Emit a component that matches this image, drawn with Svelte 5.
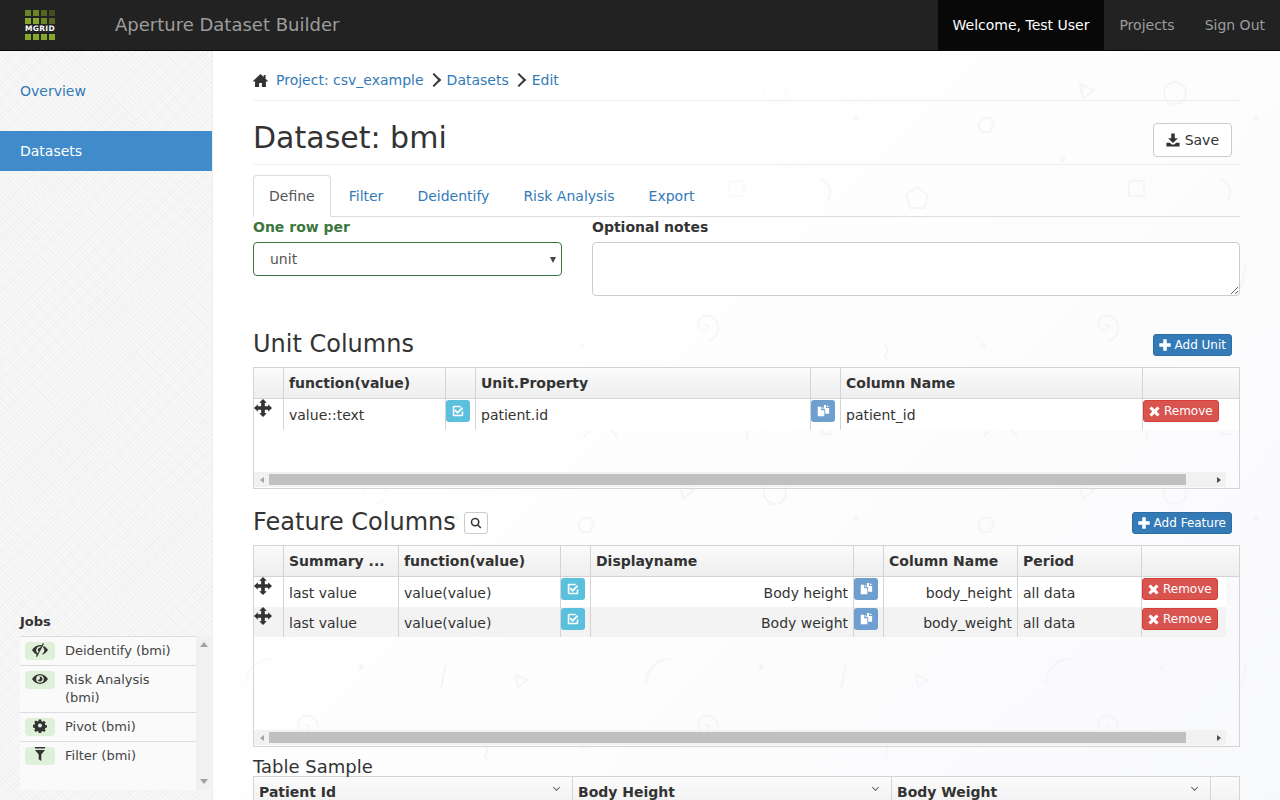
<script lang="ts">
  const tabs = ['Define', 'Filter', 'Deidentify', 'Risk Analysis', 'Export'];

  const jobs = [
    { icon: 'eyeClose', name: 'Deidentify (bmi)' },
    { icon: 'eyeOpen', name: 'Risk Analysis (bmi)' },
    { icon: 'cog', name: 'Pivot (bmi)' },
    { icon: 'filter', name: 'Filter (bmi)' }
  ];

  const features = [
    { summary: 'last value', fn: 'value(value)', display: 'Body height', column: 'body_height', period: 'all data' },
    { summary: 'last value', fn: 'value(value)', display: 'Body weight', column: 'body_weight', period: 'all data' }
  ];
</script>

{#snippet icon(name: string, size = 14)}
  <svg class="icon" width={size} height={size} viewBox="0 0 16 16" fill="currentColor" aria-hidden="true">
    {#if name === 'home'}
      <path d="M8 1 0 8.600l1 1.100 1.200-1.100V15h4.300v-4.400h3V15h4.300V8.600l1.200 1.100 1-1.100-2.600-2.500V2h-2v2.200z"/>
    {:else if name === 'save'}
      <path d="M6 .5h4V6h3.600L8 11.300 2.400 6H6zM.5 11h4L6.500 13.200h3l2-2.200h4v4.500H.5z"/>
    {:else if name === 'plus'}
      <path d="M6 1.500h4V6h4.500v4H10v4.500H6V10H1.500V6H6z"/>
    {:else if name === 'remove'}
      <path d="M4.400 1.700 8 5.300l3.600-3.600 2.700 2.700L10.700 8l3.600 3.600-2.700 2.700L8 10.700l-3.600 3.600-2.700-2.700L5.300 8 1.700 4.400z"/>
    {:else if name === 'move'}
      <path d="M8 0l3.400 3.400H9.600v3h3V4.600L16 8l-3.400 3.400V9.600h-3v3h1.800L8 16l-3.400-3.400h1.800v-3h-3v1.800L0 8l3.400-3.400v1.800h3v-3H4.600z"/>
    {:else if name === 'check'}
      <path d="M3.500 2H11v1.800H3.800v8.400h8.400V9.500L14 7.700v4.800a1.500 1.500 0 0 1-1.500 1.500h-9A1.500 1.500 0 0 1 2 12.500v-9A1.500 1.500 0 0 1 3.500 2z"/><path d="M5.200 6.300 7.500 8.500l5-5L14 5 7.500 11.500 3.800 7.800z"/>
    {:else if name === 'duplicate'}
      <path d="M2 3h4v4h3.500v7H2z"/><path d="M7 3.200 9.200 5.500H7zM9 1h2.500v3.500H15V11h-4.500V6.500L9 5z"/><path d="M12.500 1l2.400 2.400h-2.400z"/>
    {:else if name === 'search'}
      <path fill-rule="evenodd" d="M6.800 1a5.800 5.800 0 0 1 4.700 9.200l3.700 3.700-1.500 1.400-3.600-3.700A5.800 5.800 0 1 1 6.800 1zm0 2a3.800 3.800 0 1 0 0 7.600 3.800 3.800 0 0 0 0-7.600z"/>
    {:else if name === 'eyeOpen'}
      <path fill-rule="evenodd" d="M8 3c3.400 0 6.200 2.200 8 5-1.800 2.800-4.600 5-8 5s-6.200-2.200-8-5c1.800-2.800 4.600-5 8-5zm0 1.200a3.800 3.800 0 1 0 0 7.600 3.800 3.800 0 0 0 0-7.600zM8 5.500a2.500 2.500 0 1 1-2.400 3.200c.8.300 2-.2 2.300-1 .3-.8 0-1.600-.6-2.100.2-.1.400-.1.700-.1z"/>
    {:else if name === 'eyeClose'}
      <path fill-rule="evenodd" d="M10.900 1l1.100.7-7 13.300-1.100-.7.900-1.800C3 11.600 1.300 10 0 8c1.800-2.800 4.600-5 8-5 .7 0 1.300.1 1.900.2zM8 4.200a3.800 3.800 0 0 0-2 7l.7-1.300a2.500 2.500 0 0 1 1.700-4.400l.6-1.100A3.800 3.800 0 0 0 8 4.200z"/><path d="M11.700 4.100c1.800.9 3.200 2.300 4.300 3.900-1.400 2.200-3.500 4-6 4.700l.6-1.300a3.800 3.800 0 0 0 .5-6z"/>
    {:else if name === 'cog'}
      <path fill-rule="evenodd" d="M6.500 1h3l.4 2 1.400.6 1.700-1.100 2 2-1.100 1.700.6 1.400 2 .4v2.900l-2 .5-.6 1.300 1.100 1.800-2 2-1.700-1.100-1.400.5-.4 2h-3l-.4-2-1.400-.5-1.700 1.100-2-2 1.100-1.800-.6-1.300-2-.5V7.500l2-.4.6-1.400-1.100-1.700 2-2 1.700 1.100L6.100 3zM8 5.800a2.500 2.500 0 1 0 0 5 2.500 2.500 0 0 0 0-5z" transform="translate(1.400 .8) scale(.82 .8)"/>
    {:else if name === 'filter'}
      <path d="M3 0h10v1.500H3zM3 3h10L9.300 7.500V14l-2.600-1.800V7.500z"/>
    {/if}
  </svg>
{/snippet}

{#snippet hscroll()}
  <div class="hscroll">
    <span class="arrow left"></span>
    <span class="thumb"></span>
    <span class="arrow right"></span>
  </div>
{/snippet}

<div class="page">
  <nav class="navbar">
    <a class="logo" href="#top" aria-label="MGRID">
      <div class="logo-row">
        <i class="l2"></i><i class="l2"></i><i class="l3"></i><i class="l4"></i>
      </div>
      <div class="logo-row">
        <i class="l1"></i><i class="l1"></i><i class="l2"></i><i class="l3"></i>
      </div>
      <span class="logo-text">MGRID</span>
      <div class="logo-row">
        <i class="l1"></i><i class="l1"></i><i class="l1"></i><i class="l1"></i>
      </div>
    </a>
    <span class="brand">Aperture Dataset Builder</span>
    <div class="nav-right">
      <span class="welcome">Welcome, Test User</span>
      <a href="#top">Projects</a>
      <a href="#top">Sign Out</a>
    </div>
  </nav>

  <div class="body">
    <aside class="sidebar">
      <ul class="side-nav">
        <li><a href="#top">Overview</a></li>
        <li class="active"><a href="#top">Datasets</a></li>
      </ul>

      <div class="jobs">
        <h5>Jobs</h5>
        <div class="jobs-box">
          <ul class="job-list">
            {#each jobs as job}
              <li>
                <span class="job-icon">{@render icon(job.icon, 16)}</span>
                <span class="job-name">{job.name}</span>
              </li>
            {/each}
          </ul>
          <div class="vscroll">
            <span class="arrow up"></span>
            <span class="arrow down"></span>
          </div>
        </div>
      </div>
    </aside>

    <main class="main">
      <svg class="pattern" width="1068" height="749" aria-hidden="true">
        <defs>
          <pattern id="shapes" width="400" height="400" patternUnits="userSpaceOnUse" x="187" y="349">
            <g fill="none" stroke="#f4f5f6" stroke-width="2" stroke-linecap="round">
              <path d="M305 325a3 3 0 0 1 4 3 6 6 0 0 1-9 1 9 9 0 0 1 3-13 12 12 0 0 1 14 6 15 15 0 0 1-7 19"/>
              <path d="M246 283a24 24 0 0 1 24-24"/>
              <path d="M46 264l-5 24"/>
              <path d="M116 275l11 5-9 7z"/>
              <circle cx="375" cy="93" r="11"/>
              <path d="M280 84l14 6-11 9z"/>
              <path d="M178 125l4-7h8l4 7-4 7h-8z"/>
              <path d="M117 187l11 8-4 13h-14l-4-13z"/>
              <rect x="329" y="181" width="15" height="15" rx="1"/>
              <path d="M85 345l3 5-3 5 3 5"/>
              <path d="M184 37a18 18 0 0 1 33 1"/>
              <path d="M347 29v9"/>
              <path d="M22 180a14 14 0 0 1 6 20"/>
              <path d="M27 20l4 14h-10z"/>
            </g>
            <g fill="#f4f5f6">
              <circle cx="361" cy="267" r="2.500"/>
              <circle cx="183" cy="345" r="2.500"/>
              <circle cx="56" cy="118" r="2.500"/>
              <circle cx="263" cy="159" r="2.500"/>
            </g>
          </pattern>
        </defs>
        <rect width="1068" height="749" fill="url(#shapes)"/>
      </svg>

      <div class="content">
        <ol class="crumbs">
          <li class="home">{@render icon('home', 15)}<a href="#top">Project: csv_example</a></li>
          <li><a href="#top">Datasets</a></li>
          <li><a href="#top">Edit</a></li>
        </ol>

        <div class="title-row">
          <h1>Dataset: bmi</h1>
          <button class="btn save">{@render icon('save', 14)} Save</button>
        </div>

        <ul class="tabs">
          {#each tabs as tab, i}
            <li class:active={i === 0}><a href="#top">{tab}</a></li>
          {/each}
        </ul>

        <div class="form-row">
          <div class="field-unit">
            <label for="unit" class="ok">One row per</label>
            <div class="select" id="unit">unit<span class="caret"></span></div>
          </div>
          <div class="field-notes">
            <label for="notes">Optional notes</label>
            <textarea id="notes"></textarea>
          </div>
        </div>

        <div class="section-head unit-head">
          <h2>Unit Columns</h2>
          <button class="btn-xs primary">{@render icon('plus', 14)} Add Unit</button>
        </div>

        <div class="grid unit-grid">
          <div class="row head">
            <div></div><div>function(value)</div><div></div><div>Unit.Property</div><div></div><div>Column Name</div><div></div>
          </div>
          <div class="row">
            <div class="move">{@render icon('move', 18)}</div>
            <div>value::text</div>
            <div class="tool"><span class="square info">{@render icon('check', 14)}</span></div>
            <div>patient.id</div>
            <div class="tool"><span class="square dup">{@render icon('duplicate', 14)}</span></div>
            <div>patient_id</div>
            <div class="tool"><button class="btn-xs danger">{@render icon('remove', 13)} Remove</button></div>
          </div>
          <div class="spacer"></div>
          {@render hscroll()}
        </div>

        <div class="section-head feature-head">
          <h2>Feature Columns</h2>
          <span class="search-btn">{@render icon('search', 12)}</span>
          <button class="btn-xs primary push">{@render icon('plus', 14)} Add Feature</button>
        </div>

        <div class="grid feature-grid">
          <div class="row head">
            <div></div><div>Summary ...</div><div>function(value)</div><div></div><div>Displayname</div><div></div><div>Column Name</div><div>Period</div><div></div>
          </div>
          {#each features as f, i}
            <div class="row" class:odd={i === 1}>
              <div class="move">{@render icon('move', 18)}</div>
              <div>{f.summary}</div>
              <div>{f.fn}</div>
              <div class="tool"><span class="square info">{@render icon('check', 14)}</span></div>
              <div class="num">{f.display}</div>
              <div class="tool"><span class="square dup">{@render icon('duplicate', 14)}</span></div>
              <div class="num">{f.column}</div>
              <div>{f.period}</div>
              <div class="tool"><button class="btn-xs danger">{@render icon('remove', 13)} Remove</button></div>
            </div>
          {/each}
          <div class="spacer"></div>
          {@render hscroll()}
        </div>

        <h4>Table Sample</h4>
        <div class="sample">
          {#each ['Patient Id', 'Body Height', 'Body Weight'] as col}
            <div class="sample-col">{col}<span class="sort"></span></div>
          {/each}
          <div class="sample-col"></div>
        </div>
      </div>
    </main>
  </div>
</div>

<style>
  :global(body) {
    margin: 0;
    font-family: "DejaVu Sans", sans-serif;
    font-size: 14px;
    line-height: 20px;
    color: #333;
  }

  * { box-sizing: border-box; }

  a { color: #337ab7; text-decoration: none; }

  .page {
    height: 800px;
    display: flex;
    flex-direction: column;
    overflow: hidden;
  }

  .icon { display: inline-block; flex-shrink: 0; vertical-align: -2px; }

  /* top bar */
  .navbar {
    height: 51px;
    flex-shrink: 0;
    display: flex;
    align-items: stretch;
    background: #222;
    border-bottom: 1px solid #080808;
  }

  .logo {
    width: 31px;
    margin: 10px 0 0 25px;
    display: flex;
    flex-direction: column;
    gap: 2px;
  }

  .logo-row { display: flex; gap: 2px; height: 6px; }
  .logo-row i { width: 6px; height: 6px; }
  .l1 { background: #84a62c; }
  .l2 { background: #6b8427; }
  .l3 { background: #566523; }
  .l4 { background: #434d20; }

  .logo-text {
    height: 6px;
    font-size: 7.500px;
    line-height: 6px;
    font-weight: bold;
    color: #fff;
    letter-spacing: 0.3px;
    white-space: nowrap;
  }

  .brand {
    margin-left: 59px;
    font-size: 18px;
    line-height: 50px;
    color: #9d9d9d;
  }

  .nav-right { margin-left: auto; display: flex; }

  .nav-right span,
  .nav-right a {
    padding: 0 15px;
    line-height: 50px;
    color: #9d9d9d;
  }

  .nav-right .welcome { background: #080808; color: #fff; }

  .body { flex: 1; display: flex; min-height: 0; }

  /* sidebar */
  .sidebar {
    width: 213px;
    flex-shrink: 0;
    display: flex;
    flex-direction: column;
    border-right: 1px solid #eee;
    background-color: #f6f6f6;
    background-image:
      repeating-linear-gradient(135deg, rgba(0, 0, 0, 0.02) 0 1px, rgba(255, 255, 255, 0.25) 1px 3px),
      repeating-linear-gradient(45deg, rgba(0, 0, 0, 0.015) 0 1px, transparent 1px 4px);
  }

  .side-nav { list-style: none; margin: 20px 0 0; padding: 0; }

  .side-nav li a { display: block; padding: 10px 20px; height: 40px; }

  .side-nav li + li { margin-top: 20px; }

  .side-nav li.active a { background: #428bca; color: #fff; }

  .jobs { margin-top: auto; padding: 0 0 10px 20px; }

  .jobs h5 {
    margin: 0 0 4px;
    font-size: 13px;
    line-height: 20px;
    font-weight: bold;
  }

  .jobs-box { display: flex; height: 154px; width: 191px; }

  .job-list {
    list-style: none;
    margin: 0;
    padding: 0;
    flex: 1;
    background: #fafafa;
    font-size: 13px;
    line-height: 18px;
  }

  .job-list li {
    display: flex;
    gap: 10px;
    padding: 5px 15px 5px 5px;
    border-top: 1px solid #ddd;
    color: #444;
  }

  .job-icon {
    width: 30px;
    height: 18px;
    flex-shrink: 0;
    display: flex;
    align-items: flex-start;
    justify-content: center;
    background: #dff0d8;
    border-radius: 4px;
    color: #333;
  }

  .vscroll {
    width: 15px;
    background: #f1f1f1;
    display: flex;
    flex-direction: column;
    justify-content: space-between;
    align-items: center;
    padding: 6px 0;
  }

  /* main column */
  .main {
    flex: 1;
    position: relative;
    min-width: 0;
    background: linear-gradient(135deg, #fff 30%, #f8f9fb 100%);
  }

  .pattern {
    position: absolute;
    top: 0;
    left: 0;
    mask-image: linear-gradient(135deg, transparent 30%, #000 45%);
    -webkit-mask-image: linear-gradient(135deg, transparent 30%, #000 45%);
  }

  .content { position: relative; padding: 0 40px; }

  .crumbs {
    list-style: none;
    margin: 0;
    padding: 19px 0 10px;
    height: 50px;
    display: flex;
    align-items: center;
    border-bottom: 1px solid #eee;
  }

  .crumbs li { display: flex; align-items: center; }

  .crumbs li + li::before {
    content: '';
    width: 8px;
    height: 8px;
    margin: 0 8px 0 5px;
    border-top: 2px solid #333;
    border-right: 2px solid #333;
    transform: rotate(45deg);
  }

  .crumbs .home .icon { margin-right: 8px; color: #333; }

  .title-row {
    display: flex;
    align-items: flex-start;
    justify-content: space-between;
    height: 64px;
    padding: 22px 8px 0 0;
    border-bottom: 1px solid #eee;
  }

  h1 { margin: -2px 0 0; font-size: 30px; line-height: 33px; font-weight: 400; }

  .btn {
    display: inline-flex;
    align-items: center;
    gap: 5px;
    height: 34px;
    padding: 0 12px;
    font: inherit;
    color: #333;
    background: #fff;
    border: 1px solid #ccc;
    border-radius: 4px;
  }

  .tabs {
    list-style: none;
    margin: 10px 0 0;
    padding: 0;
    display: flex;
    height: 42px;
    border-bottom: 1px solid #ddd;
  }

  .tabs li a {
    display: block;
    padding: 10px 15px;
    height: 42px;
    border: 1px solid transparent;
    border-radius: 4px 4px 0 0;
    margin-right: 2px;
  }

  .tabs li.active a {
    color: #555;
    background: #fff;
    border-color: #ddd #ddd #fff;
  }

  .form-row { display: flex; gap: 30px; }

  .field-unit { width: 309px; flex-shrink: 0; }
  .field-notes { flex: 1; }

  label {
    display: block;
    margin-bottom: 5px;
    font-weight: bold;
    line-height: 20px;
  }

  label.ok { color: #3c763d; }

  .select {
    position: relative;
    height: 34px;
    padding: 6px 16px;
    color: #555;
    background: #fff;
    border: 1px solid #3c763d;
    border-radius: 4px;
  }

  .caret {
    position: absolute;
    right: 5px;
    top: 14px;
    border-left: 3px solid transparent;
    border-right: 3px solid transparent;
    border-top: 6px solid #444;
  }

  textarea {
    display: block;
    width: 100%;
    height: 54px;
    background: #fff;
    border: 1px solid #ccc;
    border-radius: 4px;
  }

  .section-head {
    display: flex;
    align-items: center;
    padding-right: 8px;
  }

  .unit-head { justify-content: space-between; margin-top: 29px; height: 38px; margin-bottom: 4px; }
  .unit-head .btn-xs { margin-top: 2px; }
  .feature-head { margin-top: 15px; height: 38px; margin-bottom: 3px; }
  .feature-head h2 { margin-top: -2px; }

  h2 { margin: 0; font-size: 24px; line-height: 26px; font-weight: 400; }

  .btn-xs {
    display: inline-flex;
    align-items: center;
    gap: 3px;
    height: 22px;
    padding: 0 5px 0 4px;
    font: inherit;
    font-size: 12px;
    line-height: 18px;
    border: 1px solid transparent;
    border-radius: 3px;
    color: #fff;
  }

  .primary { background: #337ab7; border-color: #2e6da4; }
  .danger { background: #d9534f; border-color: #d43f3a; }
  .push { margin-left: auto; }

  .search-btn {
    display: inline-flex;
    align-items: center;
    justify-content: center;
    width: 24px;
    height: 22px;
    margin-left: 8px;
    background: #fff;
    border: 1px solid #ccc;
    border-radius: 3px;
  }

  /* ui-grid style tables */
  .grid {
    display: flex;
    flex-direction: column;
    border: 1px solid #d4d4d4;
  }

  .unit-grid { height: 122px; --cols: 29px 162px 30px 335px 30px 302px 1fr; }
  .feature-grid { height: 202px; --cols: 29px 115px 162px 30px 263px 30px 134px 124px 85px; }

  .row {
    display: grid;
    grid-template-columns: var(--cols);
    height: 31px;
    background: #fff;
  }

  .feature-grid .row { width: 972px; height: 30px; }

  .row > div {
    padding: 6px 5px 0;
    border-left: 1px solid #d4d4d4;
    min-width: 0;
    white-space: nowrap;
  }

  .row > div:first-child { border-left: 0; padding: 0; }

  .row.odd { background: #f3f3f3; }

  .row.head {
    font-weight: bold;
    background: linear-gradient(#fbfbfb, #eee);
    border-bottom: 1px solid #d4d4d4;
  }

  .row.head > div { padding-top: 5px; }

  .feature-grid .row.head { width: 100%; height: 31px; }

  .row > .move { padding: 1px 0 0; color: #333; line-height: 20px; }
  .row > .tool { padding: 1px 0 0; }
  .row > .num { text-align: right; }

  .square {
    display: flex;
    align-items: center;
    justify-content: center;
    width: 24px;
    height: 22px;
    border-radius: 3px;
    color: #fff;
  }

  .info { background: #5bc0de; }
  .dup { background: #6f9fce; }

  .spacer { flex: 1; }

  .hscroll {
    display: flex;
    align-items: center;
    width: 972px;
    height: 15px;
    margin-bottom: 1px;
    background: #f1f1f1;
  }

  .thumb { width: 917px; height: 11px; margin: 0 0 0 5px; background: #c0c0c0; }

  .arrow { display: block; width: 0; height: 0; }

  .arrow.left { margin-left: 6px; border: 3px solid transparent; border-right: 4px solid #a3a3a3; border-left: 0; }
  .arrow.right { margin-left: 31px; border: 3px solid transparent; border-left: 4px solid #505050; border-right: 0; }
  .arrow.up { border: 4px solid transparent; border-bottom: 5px solid #a3a3a3; border-top: 0; }
  .arrow.down { border: 4px solid transparent; border-top: 5px solid #a3a3a3; border-bottom: 0; }

  h4 {
    margin: 10px 0 0;
    font-size: 18px;
    line-height: 19px;
    font-weight: 400;
  }

  .sample {
    display: grid;
    grid-template-columns: 319px 319px 319px 1fr;
    height: 40px;
    border: 1px solid #d4d4d4;
    background: linear-gradient(#fbfbfb, #eee);
  }

  .sample-col {
    position: relative;
    padding: 5px;
    font-weight: bold;
    border-right: 1px solid #d4d4d4;
  }

  .sample-col:last-child { border-right: 0; }

  .sort {
    position: absolute;
    right: 13px;
    top: 8px;
    width: 5px;
    height: 5px;
    border-right: 1px solid #666;
    border-bottom: 1px solid #666;
    transform: rotate(45deg);
  }

  .sample-col:last-child .sort { display: none; }
</style>
